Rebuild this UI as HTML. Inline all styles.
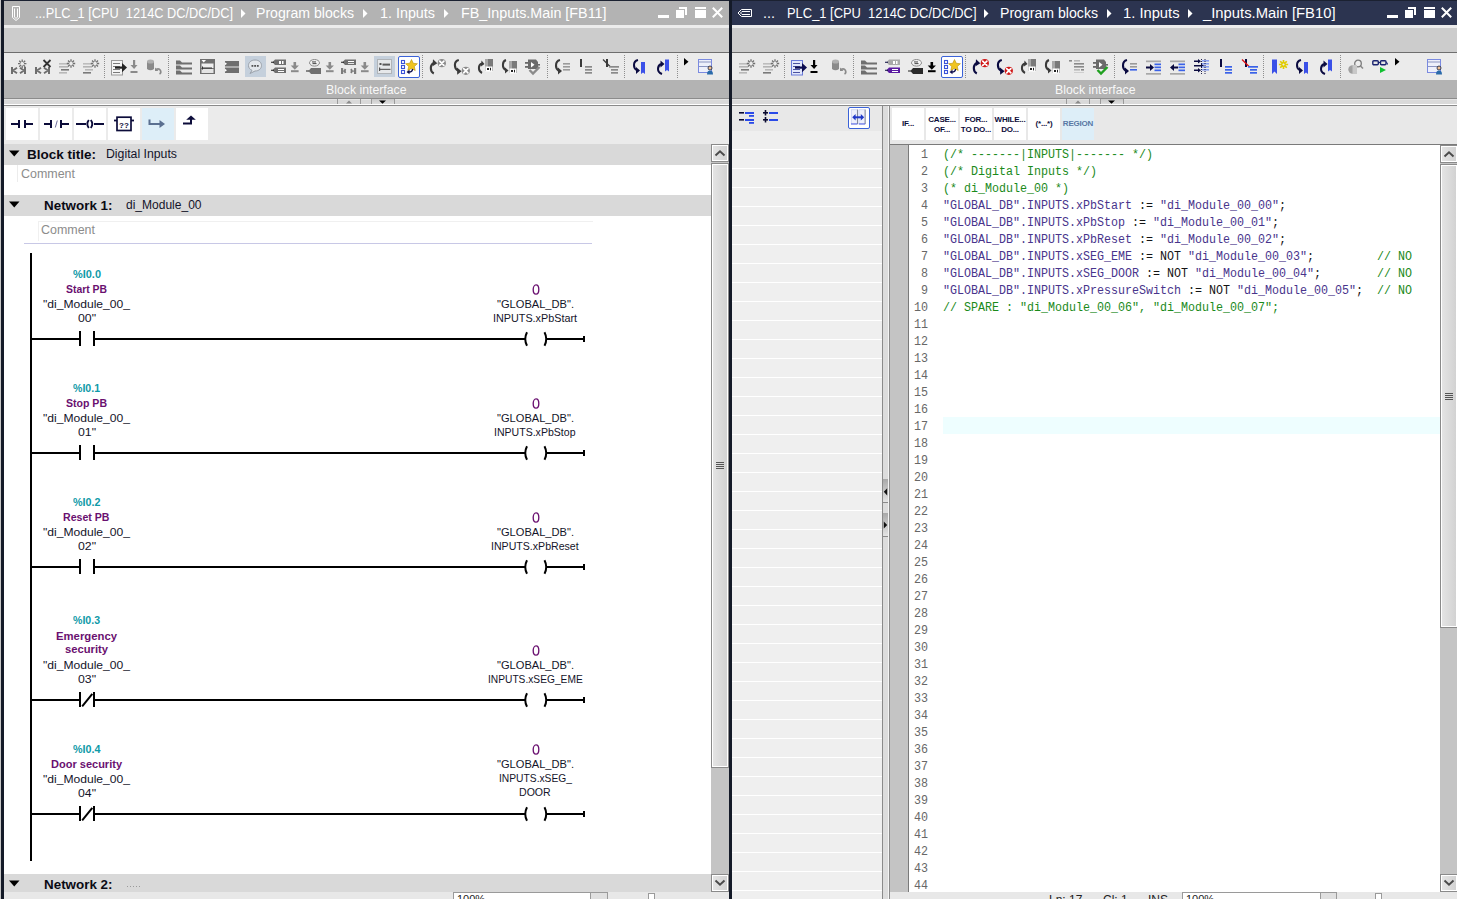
<!DOCTYPE html><html><head><meta charset="utf-8"><style>*{margin:0;padding:0;box-sizing:border-box}html,body{width:1457px;height:899px;overflow:hidden;background:#c8c8c8;font-family:"Liberation Sans",sans-serif}.t{position:absolute;white-space:nowrap;line-height:1}svg{position:absolute;overflow:visible}.mono{font-family:"Liberation Mono",monospace}</style></head><body>
<div style="position:absolute;left:0px;top:0px;width:1457px;height:1px;background:#1b2131"></div>
<div style="position:absolute;left:0px;top:0px;width:2px;height:899px;background:#c6c6c6"></div>
<div style="position:absolute;left:1px;top:0px;width:3px;height:899px;background:#141a28"></div>
<div style="position:absolute;left:729px;top:0px;width:3px;height:899px;background:#141a28"></div>
<div style="position:absolute;left:4px;top:1px;width:725px;height:24px;background:#b3b3b3"></div>
<div style="position:absolute;left:4px;top:25px;width:725px;height:3px;background:#ececec"></div>
<div style="position:absolute;left:4px;top:28px;width:725px;height:24px;background:#cccccc"></div>
<div style="position:absolute;left:4px;top:52px;width:725px;height:1px;background:#6e6e6e"></div>
<div style="position:absolute;left:4px;top:53px;width:725px;height:27px;background:#ebebeb"></div>
<div style="position:absolute;left:4px;top:80px;width:725px;height:18px;background:#b3b3b3"></div>
<div style="position:absolute;left:4px;top:98px;width:725px;height:1px;background:#8c8c8c"></div>
<div style="position:absolute;left:4px;top:99px;width:725px;height:5px;background:#d9d9d9"></div>
<div style="position:absolute;left:4px;top:99px;width:725px;height:1px;background:#e4e4e4"></div>
<div style="position:absolute;left:4px;top:104px;width:725px;height:1px;background:#ffffff"></div>
<div style="position:absolute;left:4px;top:105px;width:725px;height:1px;background:#8a8a8a"></div>
<div style="position:absolute;left:732px;top:1px;width:725px;height:24px;background:#2c3450"></div>
<div style="position:absolute;left:732px;top:25px;width:725px;height:3px;background:#ececec"></div>
<div style="position:absolute;left:732px;top:28px;width:725px;height:24px;background:#cccccc"></div>
<div style="position:absolute;left:732px;top:52px;width:725px;height:1px;background:#6e6e6e"></div>
<div style="position:absolute;left:732px;top:53px;width:725px;height:27px;background:#ebebeb"></div>
<div style="position:absolute;left:732px;top:80px;width:725px;height:18px;background:#b3b3b3"></div>
<div style="position:absolute;left:732px;top:98px;width:725px;height:1px;background:#8c8c8c"></div>
<div style="position:absolute;left:732px;top:99px;width:725px;height:5px;background:#d9d9d9"></div>
<div style="position:absolute;left:732px;top:99px;width:725px;height:1px;background:#e4e4e4"></div>
<div style="position:absolute;left:732px;top:104px;width:725px;height:1px;background:#ffffff"></div>
<div style="position:absolute;left:732px;top:105px;width:725px;height:1px;background:#8a8a8a"></div>
<div class="t" style="left:34.5px;top:6px;font-size:14px;color:#ffffff;transform-origin:0 0;transform:scaleX(0.9121);">...PLC_1 [CPU&nbsp;&nbsp;1214C DC/DC/DC]</div>
<div class="t" style="left:255.5px;top:6px;font-size:14px;color:#ffffff;transform-origin:0 0;transform:scaleX(1.0076);">Program blocks</div>
<div class="t" style="left:379.5px;top:6px;font-size:14px;color:#ffffff;transform-origin:0 0;transform:scaleX(1.0241);">1. Inputs</div>
<div class="t" style="left:460.5px;top:6px;font-size:14px;color:#ffffff;transform-origin:0 0;transform:scaleX(1.0236);">FB_Inputs.Main [FB11]</div>
<svg style="left:241px;top:9px" width="5" height="9"><path d="M0 0L4.5 4.5L0 9Z" fill="#ffffff"/></svg>
<svg style="left:363px;top:9px" width="5" height="9"><path d="M0 0L4.5 4.5L0 9Z" fill="#ffffff"/></svg>
<svg style="left:444px;top:9px" width="5" height="9"><path d="M0 0L4.5 4.5L0 9Z" fill="#ffffff"/></svg>
<div class="t" style="left:763px;top:6px;font-size:14px;color:#ffffff;transform-origin:0 0;transform:scaleX(1.0284);">...</div>
<div class="t" style="left:786.5px;top:6px;font-size:14px;color:#ffffff;transform-origin:0 0;transform:scaleX(0.9226);">PLC_1 [CPU&nbsp;&nbsp;1214C DC/DC/DC]</div>
<div class="t" style="left:999.5px;top:6px;font-size:14px;color:#ffffff;transform-origin:0 0;transform:scaleX(1.0076);">Program blocks</div>
<div class="t" style="left:1122.5px;top:6px;font-size:14px;color:#ffffff;transform-origin:0 0;transform:scaleX(1.0521);">1. Inputs</div>
<div class="t" style="left:1202.5px;top:6px;font-size:14px;color:#ffffff;transform-origin:0 0;transform:scaleX(1.0575);">_Inputs.Main [FB10]</div>
<svg style="left:984px;top:9px" width="5" height="9"><path d="M0 0L4.5 4.5L0 9Z" fill="#ffffff"/></svg>
<svg style="left:1107px;top:9px" width="5" height="9"><path d="M0 0L4.5 4.5L0 9Z" fill="#ffffff"/></svg>
<svg style="left:1188px;top:9px" width="5" height="9"><path d="M0 0L4.5 4.5L0 9Z" fill="#ffffff"/></svg>
<svg style="left:658px;top:0px" width="66" height="20"><rect x="0" y="15" width="11" height="3" fill="#fff"/><path d="M21 7H29V15H27V9H21Z" fill="#fff"/><rect x="18" y="10" width="8" height="8" fill="#fff"/><rect x="37" y="7" width="11" height="2" fill="#fff"/><rect x="37" y="10" width="11" height="8" fill="#fff"/><path d="M54.8 7.8L64.2 17.2M64.2 7.8L54.8 17.2" stroke="#fff" stroke-width="2"/></svg>
<svg style="left:1387px;top:0px" width="66" height="20"><rect x="0" y="15" width="11" height="3" fill="#fff"/><path d="M21 7H29V15H27V9H21Z" fill="#fff"/><rect x="18" y="10" width="8" height="8" fill="#fff"/><rect x="37" y="7" width="11" height="2" fill="#fff"/><rect x="37" y="10" width="11" height="8" fill="#fff"/><path d="M54.8 7.8L64.2 17.2M64.2 7.8L54.8 17.2" stroke="#fff" stroke-width="2"/></svg>
<svg style="left:11px;top:5px" width="10" height="17"><path d="M1.5 1.5h7v11l-3.5 3l-3.5-3z M3.5 3.5v8.5l1.5 1.5l1.5-1.5v-8.5" fill="none" stroke="#fff" stroke-width="1"/></svg>
<svg style="left:737px;top:8px" width="16" height="10"><path d="M14.5 1.5h-10l-3.5 3.5l3.5 3.5h10v-7z M13 3.5h-8l-1.5 1.5l1.5 1.5h8" fill="none" stroke="#fff" stroke-width="1"/></svg>
<div class="t" style="left:325.5px;top:83.5px;font-size:12px;color:#f8f8f8;transform-origin:0 0;transform:scaleX(1.0228);">Block interface</div>
<div class="t" style="left:1054.5px;top:83.5px;font-size:12px;color:#f8f8f8;transform-origin:0 0;transform:scaleX(1.0228);">Block interface</div>
<div style="position:absolute;left:337px;top:99px;width:1px;height:5px;background:#9a9a9a"></div>
<div style="position:absolute;left:360px;top:99px;width:1px;height:5px;background:#9a9a9a"></div>
<div style="position:absolute;left:371px;top:99px;width:1px;height:5px;background:#9a9a9a"></div>
<div style="position:absolute;left:372px;top:99px;width:22px;height:5px;background:linear-gradient(#c9c9c9,#dedede)"></div>
<div style="position:absolute;left:394px;top:99px;width:1px;height:5px;background:#9a9a9a"></div>
<svg style="left:346px;top:100px" width="6" height="4"><path d="M0 3.5L3 0.5L6 3.5Z" fill="#8a8a8a"/></svg>
<svg style="left:379px;top:100px" width="7" height="4"><path d="M0 0.5L3.5 3.8L7 0.5Z" fill="#000"/></svg>
<div style="position:absolute;left:1066px;top:99px;width:1px;height:5px;background:#9a9a9a"></div>
<div style="position:absolute;left:1089px;top:99px;width:1px;height:5px;background:#9a9a9a"></div>
<div style="position:absolute;left:1100px;top:99px;width:1px;height:5px;background:#9a9a9a"></div>
<div style="position:absolute;left:1101px;top:99px;width:22px;height:5px;background:linear-gradient(#c9c9c9,#dedede)"></div>
<div style="position:absolute;left:1123px;top:99px;width:1px;height:5px;background:#9a9a9a"></div>
<svg style="left:1075px;top:100px" width="6" height="4"><path d="M0 3.5L3 0.5L6 3.5Z" fill="#8a8a8a"/></svg>
<svg style="left:1108px;top:100px" width="7" height="4"><path d="M0 0.5L3.5 3.8L7 0.5Z" fill="#000"/></svg>
<div style="position:absolute;left:4px;top:106px;width:725px;height:38px;background:#ebebeb"></div>
<div style="position:absolute;left:6px;top:108px;width:32px;height:32px;background:#ffffff"></div>
<div style="position:absolute;left:40px;top:108px;width:32px;height:32px;background:#ffffff"></div>
<div style="position:absolute;left:74px;top:108px;width:32px;height:32px;background:#ffffff"></div>
<div style="position:absolute;left:108px;top:108px;width:32px;height:32px;background:#ffffff"></div>
<div style="position:absolute;left:142px;top:108px;width:32px;height:32px;background:#ddeef8"></div>
<div style="position:absolute;left:176px;top:108px;width:32px;height:32px;background:#ffffff"></div>
<svg style="left:6px;top:108px" width="210" height="32"><g fill="#0c0c3a"><rect x="5" y="15" width="7" height="2"/><rect x="12" y="12" width="2" height="8"/><rect x="18" y="12" width="2" height="8"/><rect x="20" y="15" width="7" height="2"/><rect x="38" y="15" width="6" height="2"/><rect x="44" y="12" width="2" height="8"/><rect x="54" y="12" width="2" height="8"/><rect x="56" y="15" width="7" height="2"/><rect x="70" y="15" width="10" height="2"/><rect x="88" y="15" width="10" height="2"/></g><path d="M49.3 19.5L51.3 12.5" stroke="#7070a0" stroke-width="1"/><path d="M82.8 12Q79.8 16 82.8 20M84.8 12Q87.8 16 84.8 20" stroke="#0c0c3a" stroke-width="1.9" fill="none"/><rect x="111" y="9.2" width="14" height="13.3" fill="none" stroke="#0c0c3a" stroke-width="1.7"/><rect x="108" y="11.6" width="3" height="1.8" fill="#0c0c3a"/><rect x="125" y="11.6" width="3" height="1.8" fill="#0c0c3a"/><text x="113" y="19.6" font-family="Liberation Sans" font-weight="bold" font-size="8" fill="#0c0c3a">??</text><path d="M143.5 11.5v4.5h12" stroke="#5a6f90" stroke-width="2" fill="none"/><path d="M153.5 12L159 16L153.5 20Z" fill="#5a6f90"/><path d="M177 15.5h8v-5.5" stroke="#0c0c3a" stroke-width="2" fill="none"/><path d="M180.2 11.8L185 7.5L189.8 11.8Z" fill="#0c0c3a"/></svg>
<div style="position:absolute;left:4px;top:144px;width:707px;height:21px;background:#d9d9d9"></div>
<svg style="left:9px;top:150px" width="11" height="7"><path d="M0 0.5H10.5L5.25 6.5Z" fill="#000"/></svg>
<div class="t" style="left:27px;top:148px;font-size:13px;color:#0a0a14;font-weight:bold;transform-origin:0 0;transform:scaleX(1.0383);">Block title:</div>
<div class="t" style="left:106px;top:148px;font-size:12px;color:#14142a;transform-origin:0 0;transform:scaleX(1.0235);">Digital Inputs</div>
<div style="position:absolute;left:4px;top:165px;width:707px;height:30px;background:#fff"></div>
<div style="position:absolute;left:17px;top:165px;width:1px;height:17px;background:#ececec"></div>
<div class="t" style="left:21px;top:168px;font-size:12px;color:#8c8c8c;transform-origin:0 0;transform:scaleX(1.0382);">Comment</div>
<div style="position:absolute;left:4px;top:195px;width:707px;height:21px;background:#d9d9d9"></div>
<svg style="left:9px;top:201px" width="11" height="7"><path d="M0 0.5H10.5L5.25 6.5Z" fill="#000"/></svg>
<div class="t" style="left:43.5px;top:199px;font-size:13px;color:#0a0a14;font-weight:bold;transform-origin:0 0;transform:scaleX(1.0307);">Network 1:</div>
<div class="t" style="left:126px;top:199px;font-size:12px;color:#14142a;transform-origin:0 0;transform:scaleX(1.0014);">di_Module_00</div>
<div style="position:absolute;left:4px;top:216px;width:707px;height:658px;background:#fff"></div>
<div style="position:absolute;left:38px;top:221px;width:555px;height:1px;background:#f0f0f0"></div>
<div style="position:absolute;left:38px;top:221px;width:1px;height:20px;background:#f0f0f0"></div>
<div class="t" style="left:41px;top:224px;font-size:12px;color:#8c8c8c;transform-origin:0 0;transform:scaleX(1.0382);">Comment</div>
<div style="position:absolute;left:24px;top:243px;width:568px;height:1px;background:#c8c8e6"></div>
<div style="position:absolute;left:30px;top:253px;width:2px;height:608px;background:#000"></div>
<div class="t" style="left:72.5px;top:269.19px;font-size:11px;color:#0f9aa8;font-weight:bold;transform-origin:0 0;transform:scaleX(0.9954);">%I0.0</div>
<div class="t" style="left:66.0px;top:284.39px;font-size:11px;color:#6a1070;font-weight:bold;transform-origin:0 0;transform:scaleX(0.9447);">Start PB</div>
<div class="t" style="left:43.0px;top:299.39px;font-size:11px;color:#14142a;transform-origin:0 0;transform:scaleX(1.0994);">&quot;di_Module_00_</div>
<div class="t" style="left:77.5px;top:313.39px;font-size:11px;color:#14142a;transform-origin:0 0;transform:scaleX(1.1152);">00&quot;</div>
<div class="t" style="left:496.5px;top:299.39px;font-size:11px;color:#14142a;transform-origin:0 0;transform:scaleX(1.0093);">&quot;GLOBAL_DB&quot;.</div>
<div class="t" style="left:493.0px;top:313.39px;font-size:11px;color:#14142a;transform-origin:0 0;transform:scaleX(0.9815);">INPUTS.xPbStart</div>
<svg style="left:531px;top:283.7px" width="10" height="11"><ellipse cx="5" cy="5.5" rx="2.8" ry="4.6" stroke="#6a1070" stroke-width="1.35" fill="none"/></svg>
<div style="position:absolute;left:32px;top:338px;width:492px;height:2px;background:#000"></div>
<div style="position:absolute;left:547px;top:338px;width:37px;height:2px;background:#000"></div>
<div style="position:absolute;left:583px;top:336px;width:2px;height:6px;background:#000"></div>
<svg style="left:77px;top:330px" width="20" height="18"><rect x="0" y="0" width="20" height="18" fill="#fff"/><rect x="2" y="1" width="2" height="15" fill="#000"/><rect x="16" y="1" width="2" height="15" fill="#000"/><rect x="0" y="8" width="2" height="2" fill="#000"/><rect x="18" y="8" width="2" height="2" fill="#000"/></svg>
<svg style="left:522px;top:330px" width="28" height="18"><rect x="0" y="0" width="28" height="18" fill="#fff"/><rect x="0" y="8" width="3" height="2" fill="#000"/><rect x="25" y="8" width="3" height="2" fill="#000"/><path d="M5 2.2Q1.5 9 5 15.8" stroke="#000" stroke-width="2" fill="none"/><path d="M22.5 2.2Q26 9 22.5 15.8" stroke="#000" stroke-width="2" fill="none"/></svg>
<div class="t" style="left:73.0px;top:383.19px;font-size:11px;color:#0f9aa8;font-weight:bold;transform-origin:0 0;transform:scaleX(0.9599);">%I0.1</div>
<div class="t" style="left:66.0px;top:398.39px;font-size:11px;color:#6a1070;font-weight:bold;transform-origin:0 0;transform:scaleX(0.9585);">Stop PB</div>
<div class="t" style="left:43.0px;top:413.39px;font-size:11px;color:#14142a;transform-origin:0 0;transform:scaleX(1.0994);">&quot;di_Module_00_</div>
<div class="t" style="left:77.5px;top:427.39px;font-size:11px;color:#14142a;transform-origin:0 0;transform:scaleX(1.1152);">01&quot;</div>
<div class="t" style="left:496.5px;top:413.39px;font-size:11px;color:#14142a;transform-origin:0 0;transform:scaleX(1.0093);">&quot;GLOBAL_DB&quot;.</div>
<div class="t" style="left:494.25px;top:427.39px;font-size:11px;color:#14142a;transform-origin:0 0;transform:scaleX(0.9591);">INPUTS.xPbStop</div>
<svg style="left:531px;top:397.7px" width="10" height="11"><ellipse cx="5" cy="5.5" rx="2.8" ry="4.6" stroke="#6a1070" stroke-width="1.35" fill="none"/></svg>
<div style="position:absolute;left:32px;top:452px;width:492px;height:2px;background:#000"></div>
<div style="position:absolute;left:547px;top:452px;width:37px;height:2px;background:#000"></div>
<div style="position:absolute;left:583px;top:450px;width:2px;height:6px;background:#000"></div>
<svg style="left:77px;top:444px" width="20" height="18"><rect x="0" y="0" width="20" height="18" fill="#fff"/><rect x="2" y="1" width="2" height="15" fill="#000"/><rect x="16" y="1" width="2" height="15" fill="#000"/><rect x="0" y="8" width="2" height="2" fill="#000"/><rect x="18" y="8" width="2" height="2" fill="#000"/></svg>
<svg style="left:522px;top:444px" width="28" height="18"><rect x="0" y="0" width="28" height="18" fill="#fff"/><rect x="0" y="8" width="3" height="2" fill="#000"/><rect x="25" y="8" width="3" height="2" fill="#000"/><path d="M5 2.2Q1.5 9 5 15.8" stroke="#000" stroke-width="2" fill="none"/><path d="M22.5 2.2Q26 9 22.5 15.8" stroke="#000" stroke-width="2" fill="none"/></svg>
<div class="t" style="left:72.75px;top:497.19px;font-size:11px;color:#0f9aa8;font-weight:bold;transform-origin:0 0;transform:scaleX(0.9777);">%I0.2</div>
<div class="t" style="left:63.25px;top:512.39px;font-size:11px;color:#6a1070;font-weight:bold;transform-origin:0 0;transform:scaleX(0.9628);">Reset PB</div>
<div class="t" style="left:43.0px;top:527.39px;font-size:11px;color:#14142a;transform-origin:0 0;transform:scaleX(1.0994);">&quot;di_Module_00_</div>
<div class="t" style="left:77.5px;top:541.39px;font-size:11px;color:#14142a;transform-origin:0 0;transform:scaleX(1.1152);">02&quot;</div>
<div class="t" style="left:496.5px;top:527.39px;font-size:11px;color:#14142a;transform-origin:0 0;transform:scaleX(1.0093);">&quot;GLOBAL_DB&quot;.</div>
<div class="t" style="left:491.15px;top:541.39px;font-size:11px;color:#14142a;transform-origin:0 0;transform:scaleX(0.9628);">INPUTS.xPbReset</div>
<svg style="left:531px;top:511.70000000000005px" width="10" height="11"><ellipse cx="5" cy="5.5" rx="2.8" ry="4.6" stroke="#6a1070" stroke-width="1.35" fill="none"/></svg>
<div style="position:absolute;left:32px;top:566px;width:492px;height:2px;background:#000"></div>
<div style="position:absolute;left:547px;top:566px;width:37px;height:2px;background:#000"></div>
<div style="position:absolute;left:583px;top:564px;width:2px;height:6px;background:#000"></div>
<svg style="left:77px;top:558px" width="20" height="18"><rect x="0" y="0" width="20" height="18" fill="#fff"/><rect x="2" y="1" width="2" height="15" fill="#000"/><rect x="16" y="1" width="2" height="15" fill="#000"/><rect x="0" y="8" width="2" height="2" fill="#000"/><rect x="18" y="8" width="2" height="2" fill="#000"/></svg>
<svg style="left:522px;top:558px" width="28" height="18"><rect x="0" y="0" width="28" height="18" fill="#fff"/><rect x="0" y="8" width="3" height="2" fill="#000"/><rect x="25" y="8" width="3" height="2" fill="#000"/><path d="M5 2.2Q1.5 9 5 15.8" stroke="#000" stroke-width="2" fill="none"/><path d="M22.5 2.2Q26 9 22.5 15.8" stroke="#000" stroke-width="2" fill="none"/></svg>
<div class="t" style="left:73.0px;top:615.49px;font-size:11px;color:#0f9aa8;font-weight:bold;transform-origin:0 0;transform:scaleX(0.9599);">%I0.3</div>
<div class="t" style="left:56.0px;top:630.69px;font-size:11px;color:#6a1070;font-weight:bold;transform-origin:0 0;transform:scaleX(1.0285);">Emergency</div>
<div class="t" style="left:65.0px;top:644.39px;font-size:11px;color:#6a1070;font-weight:bold;transform-origin:0 0;transform:scaleX(1.0192);">security</div>
<div class="t" style="left:43.0px;top:660.39px;font-size:11px;color:#14142a;transform-origin:0 0;transform:scaleX(1.0994);">&quot;di_Module_00_</div>
<div class="t" style="left:77.5px;top:674.39px;font-size:11px;color:#14142a;transform-origin:0 0;transform:scaleX(1.1152);">03&quot;</div>
<div class="t" style="left:496.5px;top:660.39px;font-size:11px;color:#14142a;transform-origin:0 0;transform:scaleX(1.0093);">&quot;GLOBAL_DB&quot;.</div>
<div class="t" style="left:487.65px;top:674.39px;font-size:11px;color:#14142a;transform-origin:0 0;transform:scaleX(0.9277);">INPUTS.xSEG_EME</div>
<svg style="left:531px;top:644.7px" width="10" height="11"><ellipse cx="5" cy="5.5" rx="2.8" ry="4.6" stroke="#6a1070" stroke-width="1.35" fill="none"/></svg>
<div style="position:absolute;left:32px;top:699px;width:492px;height:2px;background:#000"></div>
<div style="position:absolute;left:547px;top:699px;width:37px;height:2px;background:#000"></div>
<div style="position:absolute;left:583px;top:697px;width:2px;height:6px;background:#000"></div>
<svg style="left:77px;top:691px" width="20" height="18"><rect x="0" y="0" width="20" height="18" fill="#fff"/><rect x="2" y="1" width="2" height="15" fill="#000"/><rect x="16" y="1" width="2" height="15" fill="#000"/><rect x="0" y="8" width="2" height="2" fill="#000"/><rect x="18" y="8" width="2" height="2" fill="#000"/><path d="M5.2 15.3L15.3 2.8" stroke="#000" stroke-width="2"/></svg>
<svg style="left:522px;top:691px" width="28" height="18"><rect x="0" y="0" width="28" height="18" fill="#fff"/><rect x="0" y="8" width="3" height="2" fill="#000"/><rect x="25" y="8" width="3" height="2" fill="#000"/><path d="M5 2.2Q1.5 9 5 15.8" stroke="#000" stroke-width="2" fill="none"/><path d="M22.5 2.2Q26 9 22.5 15.8" stroke="#000" stroke-width="2" fill="none"/></svg>
<div class="t" style="left:72.75px;top:744.19px;font-size:11px;color:#0f9aa8;font-weight:bold;transform-origin:0 0;transform:scaleX(0.9777);">%I0.4</div>
<div class="t" style="left:51.0px;top:759.39px;font-size:11px;color:#6a1070;font-weight:bold;transform-origin:0 0;transform:scaleX(1.0013);">Door security</div>
<div class="t" style="left:43.0px;top:774.39px;font-size:11px;color:#14142a;transform-origin:0 0;transform:scaleX(1.0994);">&quot;di_Module_00_</div>
<div class="t" style="left:77.5px;top:788.39px;font-size:11px;color:#14142a;transform-origin:0 0;transform:scaleX(1.1152);">04&quot;</div>
<div class="t" style="left:496.5px;top:759.19px;font-size:11px;color:#14142a;transform-origin:0 0;transform:scaleX(1.0093);">&quot;GLOBAL_DB&quot;.</div>
<div class="t" style="left:498.5px;top:773.19px;font-size:11px;color:#14142a;transform-origin:0 0;transform:scaleX(0.9330);">INPUTS.xSEG_</div>
<div class="t" style="left:519.15px;top:787.19px;font-size:11px;color:#14142a;transform-origin:0 0;transform:scaleX(0.9606);">DOOR</div>
<svg style="left:531px;top:743.5px" width="10" height="11"><ellipse cx="5" cy="5.5" rx="2.8" ry="4.6" stroke="#6a1070" stroke-width="1.35" fill="none"/></svg>
<div style="position:absolute;left:32px;top:813px;width:492px;height:2px;background:#000"></div>
<div style="position:absolute;left:547px;top:813px;width:37px;height:2px;background:#000"></div>
<div style="position:absolute;left:583px;top:811px;width:2px;height:6px;background:#000"></div>
<svg style="left:77px;top:805px" width="20" height="18"><rect x="0" y="0" width="20" height="18" fill="#fff"/><rect x="2" y="1" width="2" height="15" fill="#000"/><rect x="16" y="1" width="2" height="15" fill="#000"/><rect x="0" y="8" width="2" height="2" fill="#000"/><rect x="18" y="8" width="2" height="2" fill="#000"/><path d="M5.2 15.3L15.3 2.8" stroke="#000" stroke-width="2"/></svg>
<svg style="left:522px;top:805px" width="28" height="18"><rect x="0" y="0" width="28" height="18" fill="#fff"/><rect x="0" y="8" width="3" height="2" fill="#000"/><rect x="25" y="8" width="3" height="2" fill="#000"/><path d="M5 2.2Q1.5 9 5 15.8" stroke="#000" stroke-width="2" fill="none"/><path d="M22.5 2.2Q26 9 22.5 15.8" stroke="#000" stroke-width="2" fill="none"/></svg>
<div style="position:absolute;left:4px;top:874px;width:707px;height:18px;background:#d9d9d9"></div>
<svg style="left:9px;top:880px" width="11" height="7"><path d="M0 0.5H10.5L5.25 6.5Z" fill="#000"/></svg>
<div class="t" style="left:43.5px;top:878px;font-size:13px;color:#0a0a14;font-weight:bold;transform-origin:0 0;transform:scaleX(1.0307);">Network 2:</div>
<svg style="left:127px;top:886px" width="15" height="2"><path d="M0 .5H15" stroke="#9a9a9a" stroke-width="1" stroke-dasharray="1 2"/></svg>
<div style="position:absolute;left:4px;top:892px;width:725px;height:7px;background:#e8e8e8"></div>
<div style="position:absolute;left:453px;top:892px;width:155px;height:7px;background:#fff;border:1px solid #9a9a9a;border-bottom:none"></div>
<div style="position:absolute;left:590px;top:892px;width:18px;height:7px;background:#e0e0e0;border:1px solid #9a9a9a;border-bottom:none"></div>
<div style="position:absolute;left:648px;top:893px;width:7px;height:6px;background:#fff;border:1px solid #9a9a9a;border-bottom:none"></div>
<div style="position:absolute;left:711px;top:144px;width:18px;height:748px;background:#c4c4c4"></div>
<div style="position:absolute;left:711px;top:144px;width:18px;height:18px;background:#fff;border:1px solid #8a8a8a"></div>
<div style="position:absolute;left:713px;top:146px;width:14px;height:14px;background:linear-gradient(90deg,#e4e4e4,#d2d2d2)"></div>
<svg style="left:714px;top:149px" width="12" height="8"><path d="M1.5 6.5L6 2.2L10.5 6.5" stroke="#4a4a4a" stroke-width="1.9" fill="none"/></svg>
<div style="position:absolute;left:711px;top:163px;width:18px;height:605px;background:#fff;border:1px solid #8a8a8a"></div>
<div style="position:absolute;left:713px;top:165px;width:14px;height:601px;background:linear-gradient(90deg,#e4e4e4,#d2d2d2)"></div>
<svg style="left:716px;top:462px" width="9" height="8"><path d="M0 .5h8M0 2.5h8M0 4.5h8M0 6.5h8" stroke="#555" stroke-width="1"/></svg>
<div style="position:absolute;left:711px;top:874px;width:18px;height:18px;background:#fff;border:1px solid #8a8a8a"></div>
<div style="position:absolute;left:713px;top:876px;width:14px;height:14px;background:linear-gradient(90deg,#e4e4e4,#d2d2d2)"></div>
<svg style="left:714px;top:879px" width="12" height="8"><path d="M1.5 1.5L6 5.8L10.5 1.5" stroke="#4a4a4a" stroke-width="1.9" fill="none"/></svg>
<div style="position:absolute;left:732px;top:106px;width:150px;height:25px;background:#e8e8e8"></div>
<div style="position:absolute;left:732px;top:131px;width:150px;height:768px;background:#efefef"></div>
<div style="position:absolute;left:732px;top:149px;width:150px;height:1px;background:#ffffff"></div>
<div style="position:absolute;left:732px;top:168px;width:150px;height:1px;background:#ffffff"></div>
<div style="position:absolute;left:732px;top:187px;width:150px;height:1px;background:#ffffff"></div>
<div style="position:absolute;left:732px;top:206px;width:150px;height:1px;background:#ffffff"></div>
<div style="position:absolute;left:732px;top:225px;width:150px;height:1px;background:#ffffff"></div>
<div style="position:absolute;left:732px;top:244px;width:150px;height:1px;background:#ffffff"></div>
<div style="position:absolute;left:732px;top:263px;width:150px;height:1px;background:#ffffff"></div>
<div style="position:absolute;left:732px;top:282px;width:150px;height:1px;background:#ffffff"></div>
<div style="position:absolute;left:732px;top:301px;width:150px;height:1px;background:#ffffff"></div>
<div style="position:absolute;left:732px;top:320px;width:150px;height:1px;background:#ffffff"></div>
<div style="position:absolute;left:732px;top:339px;width:150px;height:1px;background:#ffffff"></div>
<div style="position:absolute;left:732px;top:358px;width:150px;height:1px;background:#ffffff"></div>
<div style="position:absolute;left:732px;top:377px;width:150px;height:1px;background:#ffffff"></div>
<div style="position:absolute;left:732px;top:396px;width:150px;height:1px;background:#ffffff"></div>
<div style="position:absolute;left:732px;top:415px;width:150px;height:1px;background:#ffffff"></div>
<div style="position:absolute;left:732px;top:434px;width:150px;height:1px;background:#ffffff"></div>
<div style="position:absolute;left:732px;top:453px;width:150px;height:1px;background:#ffffff"></div>
<div style="position:absolute;left:732px;top:472px;width:150px;height:1px;background:#ffffff"></div>
<div style="position:absolute;left:732px;top:491px;width:150px;height:1px;background:#ffffff"></div>
<div style="position:absolute;left:732px;top:510px;width:150px;height:1px;background:#ffffff"></div>
<div style="position:absolute;left:732px;top:529px;width:150px;height:1px;background:#ffffff"></div>
<div style="position:absolute;left:732px;top:548px;width:150px;height:1px;background:#ffffff"></div>
<div style="position:absolute;left:732px;top:567px;width:150px;height:1px;background:#ffffff"></div>
<div style="position:absolute;left:732px;top:586px;width:150px;height:1px;background:#ffffff"></div>
<div style="position:absolute;left:732px;top:605px;width:150px;height:1px;background:#ffffff"></div>
<div style="position:absolute;left:732px;top:624px;width:150px;height:1px;background:#ffffff"></div>
<div style="position:absolute;left:732px;top:643px;width:150px;height:1px;background:#ffffff"></div>
<div style="position:absolute;left:732px;top:662px;width:150px;height:1px;background:#ffffff"></div>
<div style="position:absolute;left:732px;top:681px;width:150px;height:1px;background:#ffffff"></div>
<div style="position:absolute;left:732px;top:700px;width:150px;height:1px;background:#ffffff"></div>
<div style="position:absolute;left:732px;top:719px;width:150px;height:1px;background:#ffffff"></div>
<div style="position:absolute;left:732px;top:738px;width:150px;height:1px;background:#ffffff"></div>
<div style="position:absolute;left:732px;top:757px;width:150px;height:1px;background:#ffffff"></div>
<div style="position:absolute;left:732px;top:776px;width:150px;height:1px;background:#ffffff"></div>
<div style="position:absolute;left:732px;top:795px;width:150px;height:1px;background:#ffffff"></div>
<div style="position:absolute;left:732px;top:814px;width:150px;height:1px;background:#ffffff"></div>
<div style="position:absolute;left:732px;top:833px;width:150px;height:1px;background:#ffffff"></div>
<div style="position:absolute;left:732px;top:852px;width:150px;height:1px;background:#ffffff"></div>
<div style="position:absolute;left:732px;top:871px;width:150px;height:1px;background:#ffffff"></div>
<div style="position:absolute;left:732px;top:890px;width:150px;height:1px;background:#ffffff"></div>
<div style="position:absolute;left:848px;top:107px;width:22px;height:22px;background:#fff;border:1.5px solid #3a62d8;border-radius:2px"></div>
<svg style="left:850px;top:109px" width="18" height="17"><rect x="1.2" y="0.8" width="6" height="14" fill="#eef0fb" stroke="#b8c0f0" stroke-width="0.6"/><rect x="8.9" y="0.8" width="6" height="14" fill="#eef0fb" stroke="#b8c0f0" stroke-width="0.6"/><path d="M7.5 0.5V15M15.2 0.5V15" stroke="#7a8090" stroke-width="0.9"/><path d="M1 15H7.5M8.8 15H15.2" stroke="#4a5ae0" stroke-width="1"/><path d="M4.5 8.3H11.8" stroke="#2038c8" stroke-width="2"/><path d="M2.2 8.3L5.6 5V11.6Z M14.2 8.3L10.8 5V11.6Z" fill="#2038c8"/></svg>
<svg style="left:732px;top:104px" width="60" height="30"><rect x="7" y="8" width="5" height="1.6" fill="#0a0a30"/><rect x="13" y="8" width="9" height="2" fill="#2a4ae8"/><rect x="17" y="11" width="5" height="1.8" fill="#2a4ae8"/><rect x="7" y="15" width="5" height="1.6" fill="#0a0a30"/><rect x="13" y="15" width="9" height="2" fill="#2a4ae8"/><rect x="17" y="18" width="5" height="1.8" fill="#2a4ae8"/><rect x="31" y="8" width="5" height="1.6" fill="#0a0a30"/><rect x="32.7" y="6" width="1.6" height="5.5" fill="#0a0a30"/><rect x="37" y="8" width="9" height="2" fill="#2a4ae8"/><rect x="31" y="15" width="5" height="1.6" fill="#0a0a30"/><rect x="32.7" y="13" width="1.6" height="5.5" fill="#0a0a30"/><rect x="37" y="15" width="9" height="2" fill="#2a4ae8"/></svg>
<div style="position:absolute;left:882px;top:106px;width:1px;height:793px;background:#8a8a8a"></div>
<div style="position:absolute;left:883px;top:106px;width:5px;height:793px;background:#dcdcdc"></div>
<div style="position:absolute;left:888px;top:106px;width:1px;height:793px;background:#f4f4f4"></div>
<div style="position:absolute;left:889px;top:106px;width:1px;height:793px;background:#8a8a8a"></div>
<div style="position:absolute;left:883px;top:479px;width:5px;height:23px;background:linear-gradient(#a8a8a8,#e4e4e4)"></div>
<div style="position:absolute;left:883px;top:502px;width:5px;height:1px;background:#8a8a8a"></div>
<div style="position:absolute;left:883px;top:513px;width:5px;height:23px;background:linear-gradient(#a8a8a8,#e4e4e4)"></div>
<div style="position:absolute;left:883px;top:536px;width:5px;height:1px;background:#8a8a8a"></div>
<svg style="left:883px;top:488px" width="5" height="41"><path d="M4.2 0.2L0.8 3.8L4.2 7.4Z M0.8 33.4L4.2 37L0.8 40.6Z" fill="#111"/></svg>
<div style="position:absolute;left:890px;top:106px;width:567px;height:38px;background:#e8e8e8"></div>
<div style="position:absolute;left:892px;top:108px;width:32px;height:32px;background:#ffffff"></div>
<div class="t" style="left:892px;top:120px;font-size:8px;color:#0c0c3a;width:32px;text-align:center;font-weight:bold;letter-spacing:-0.2px">IF...</div>
<div style="position:absolute;left:926px;top:108px;width:32px;height:32px;background:#ffffff"></div>
<div class="t" style="left:926px;top:115.5px;font-size:8px;color:#0c0c3a;width:32px;text-align:center;font-weight:bold;letter-spacing:-0.2px">CASE...</div>
<div class="t" style="left:926px;top:125.5px;font-size:8px;color:#0c0c3a;width:32px;text-align:center;font-weight:bold;letter-spacing:-0.2px">OF...</div>
<div style="position:absolute;left:960px;top:108px;width:32px;height:32px;background:#ffffff"></div>
<div class="t" style="left:960px;top:115.5px;font-size:8px;color:#0c0c3a;width:32px;text-align:center;font-weight:bold;letter-spacing:-0.2px">FOR...</div>
<div class="t" style="left:960px;top:125.5px;font-size:8px;color:#0c0c3a;width:32px;text-align:center;font-weight:bold;letter-spacing:-0.2px">TO DO...</div>
<div style="position:absolute;left:994px;top:108px;width:32px;height:32px;background:#ffffff"></div>
<div class="t" style="left:994px;top:115.5px;font-size:8px;color:#0c0c3a;width:32px;text-align:center;font-weight:bold;letter-spacing:-0.2px">WHILE...</div>
<div class="t" style="left:994px;top:125.5px;font-size:8px;color:#0c0c3a;width:32px;text-align:center;font-weight:bold;letter-spacing:-0.2px">DO...</div>
<div style="position:absolute;left:1028px;top:108px;width:32px;height:32px;background:#ffffff"></div>
<div class="t" style="left:1028px;top:120px;font-size:8px;color:#0c0c3a;width:32px;text-align:center;font-weight:bold;letter-spacing:-0.2px">(*...*)</div>
<div style="position:absolute;left:1062px;top:108px;width:32px;height:32px;background:#ddeef8"></div>
<div class="t" style="left:1062px;top:120px;font-size:8px;color:#5a78a4;width:32px;text-align:center;font-weight:bold;letter-spacing:-0.2px">REGION</div>
<div style="position:absolute;left:890px;top:144px;width:567px;height:1px;background:#7a7a7a"></div>
<div style="position:absolute;left:890px;top:145px;width:18px;height:747px;background:#c4c4c4"></div>
<div style="position:absolute;left:908px;top:145px;width:1px;height:747px;background:#7a7a7a"></div>
<div style="position:absolute;left:909px;top:145px;width:531px;height:747px;background:#ffffff"></div>
<div style="position:absolute;left:943px;top:417px;width:497px;height:17px;background:#eefeff"></div>
<div class="t mono" style="left:921px;top:147px;font-size:12px;line-height:17px;color:#676767;transform-origin:0 0;transform:scaleX(0.9722)">1</div>
<div class="t mono" style="left:943px;top:147px;font-size:12px;line-height:17px;white-space:pre;transform-origin:0 0;transform:scaleX(0.9722)"><span style="color:#1a8a1a">(/* -------|INPUTS|------- */)</span></div>
<div class="t mono" style="left:921px;top:164px;font-size:12px;line-height:17px;color:#676767;transform-origin:0 0;transform:scaleX(0.9722)">2</div>
<div class="t mono" style="left:943px;top:164px;font-size:12px;line-height:17px;white-space:pre;transform-origin:0 0;transform:scaleX(0.9722)"><span style="color:#1a8a1a">(/* Digital Inputs */)</span></div>
<div class="t mono" style="left:921px;top:181px;font-size:12px;line-height:17px;color:#676767;transform-origin:0 0;transform:scaleX(0.9722)">3</div>
<div class="t mono" style="left:943px;top:181px;font-size:12px;line-height:17px;white-space:pre;transform-origin:0 0;transform:scaleX(0.9722)"><span style="color:#1a8a1a">(* di_Module_00 *)</span></div>
<div class="t mono" style="left:921px;top:198px;font-size:12px;line-height:17px;color:#676767;transform-origin:0 0;transform:scaleX(0.9722)">4</div>
<div class="t mono" style="left:943px;top:198px;font-size:12px;line-height:17px;white-space:pre;transform-origin:0 0;transform:scaleX(0.9722)"><span style="color:#48348c">&quot;GLOBAL_DB&quot;.INPUTS.xPbStart</span><span style="color:#141414"> := </span><span style="color:#48348c">&quot;di_Module_00_00&quot;</span><span style="color:#141414">;</span></div>
<div class="t mono" style="left:921px;top:215px;font-size:12px;line-height:17px;color:#676767;transform-origin:0 0;transform:scaleX(0.9722)">5</div>
<div class="t mono" style="left:943px;top:215px;font-size:12px;line-height:17px;white-space:pre;transform-origin:0 0;transform:scaleX(0.9722)"><span style="color:#48348c">&quot;GLOBAL_DB&quot;.INPUTS.xPbStop</span><span style="color:#141414"> := </span><span style="color:#48348c">&quot;di_Module_00_01&quot;</span><span style="color:#141414">;</span></div>
<div class="t mono" style="left:921px;top:232px;font-size:12px;line-height:17px;color:#676767;transform-origin:0 0;transform:scaleX(0.9722)">6</div>
<div class="t mono" style="left:943px;top:232px;font-size:12px;line-height:17px;white-space:pre;transform-origin:0 0;transform:scaleX(0.9722)"><span style="color:#48348c">&quot;GLOBAL_DB&quot;.INPUTS.xPbReset</span><span style="color:#141414"> := </span><span style="color:#48348c">&quot;di_Module_00_02&quot;</span><span style="color:#141414">;</span></div>
<div class="t mono" style="left:921px;top:249px;font-size:12px;line-height:17px;color:#676767;transform-origin:0 0;transform:scaleX(0.9722)">7</div>
<div class="t mono" style="left:943px;top:249px;font-size:12px;line-height:17px;white-space:pre;transform-origin:0 0;transform:scaleX(0.9722)"><span style="color:#48348c">&quot;GLOBAL_DB&quot;.INPUTS.xSEG_EME</span><span style="color:#141414"> := NOT </span><span style="color:#48348c">&quot;di_Module_00_03&quot;</span><span style="color:#141414">;         </span><span style="color:#1a8a1a">// NO</span></div>
<div class="t mono" style="left:921px;top:266px;font-size:12px;line-height:17px;color:#676767;transform-origin:0 0;transform:scaleX(0.9722)">8</div>
<div class="t mono" style="left:943px;top:266px;font-size:12px;line-height:17px;white-space:pre;transform-origin:0 0;transform:scaleX(0.9722)"><span style="color:#48348c">&quot;GLOBAL_DB&quot;.INPUTS.xSEG_DOOR</span><span style="color:#141414"> := NOT </span><span style="color:#48348c">&quot;di_Module_00_04&quot;</span><span style="color:#141414">;        </span><span style="color:#1a8a1a">// NO</span></div>
<div class="t mono" style="left:921px;top:283px;font-size:12px;line-height:17px;color:#676767;transform-origin:0 0;transform:scaleX(0.9722)">9</div>
<div class="t mono" style="left:943px;top:283px;font-size:12px;line-height:17px;white-space:pre;transform-origin:0 0;transform:scaleX(0.9722)"><span style="color:#48348c">&quot;GLOBAL_DB&quot;.INPUTS.xPressureSwitch</span><span style="color:#141414"> := NOT </span><span style="color:#48348c">&quot;di_Module_00_05&quot;</span><span style="color:#141414">;  </span><span style="color:#1a8a1a">// NO</span></div>
<div class="t mono" style="left:914px;top:300px;font-size:12px;line-height:17px;color:#676767;transform-origin:0 0;transform:scaleX(0.9722)">10</div>
<div class="t mono" style="left:943px;top:300px;font-size:12px;line-height:17px;white-space:pre;transform-origin:0 0;transform:scaleX(0.9722)"><span style="color:#1a8a1a">// SPARE : &quot;di_Module_00_06&quot;, &quot;di_Module_00_07&quot;;</span></div>
<div class="t mono" style="left:914px;top:317px;font-size:12px;line-height:17px;color:#676767;transform-origin:0 0;transform:scaleX(0.9722)">11</div>
<div class="t mono" style="left:914px;top:334px;font-size:12px;line-height:17px;color:#676767;transform-origin:0 0;transform:scaleX(0.9722)">12</div>
<div class="t mono" style="left:914px;top:351px;font-size:12px;line-height:17px;color:#676767;transform-origin:0 0;transform:scaleX(0.9722)">13</div>
<div class="t mono" style="left:914px;top:368px;font-size:12px;line-height:17px;color:#676767;transform-origin:0 0;transform:scaleX(0.9722)">14</div>
<div class="t mono" style="left:914px;top:385px;font-size:12px;line-height:17px;color:#676767;transform-origin:0 0;transform:scaleX(0.9722)">15</div>
<div class="t mono" style="left:914px;top:402px;font-size:12px;line-height:17px;color:#676767;transform-origin:0 0;transform:scaleX(0.9722)">16</div>
<div class="t mono" style="left:914px;top:419px;font-size:12px;line-height:17px;color:#676767;transform-origin:0 0;transform:scaleX(0.9722)">17</div>
<div class="t mono" style="left:914px;top:436px;font-size:12px;line-height:17px;color:#676767;transform-origin:0 0;transform:scaleX(0.9722)">18</div>
<div class="t mono" style="left:914px;top:453px;font-size:12px;line-height:17px;color:#676767;transform-origin:0 0;transform:scaleX(0.9722)">19</div>
<div class="t mono" style="left:914px;top:470px;font-size:12px;line-height:17px;color:#676767;transform-origin:0 0;transform:scaleX(0.9722)">20</div>
<div class="t mono" style="left:914px;top:487px;font-size:12px;line-height:17px;color:#676767;transform-origin:0 0;transform:scaleX(0.9722)">21</div>
<div class="t mono" style="left:914px;top:504px;font-size:12px;line-height:17px;color:#676767;transform-origin:0 0;transform:scaleX(0.9722)">22</div>
<div class="t mono" style="left:914px;top:521px;font-size:12px;line-height:17px;color:#676767;transform-origin:0 0;transform:scaleX(0.9722)">23</div>
<div class="t mono" style="left:914px;top:538px;font-size:12px;line-height:17px;color:#676767;transform-origin:0 0;transform:scaleX(0.9722)">24</div>
<div class="t mono" style="left:914px;top:555px;font-size:12px;line-height:17px;color:#676767;transform-origin:0 0;transform:scaleX(0.9722)">25</div>
<div class="t mono" style="left:914px;top:572px;font-size:12px;line-height:17px;color:#676767;transform-origin:0 0;transform:scaleX(0.9722)">26</div>
<div class="t mono" style="left:914px;top:589px;font-size:12px;line-height:17px;color:#676767;transform-origin:0 0;transform:scaleX(0.9722)">27</div>
<div class="t mono" style="left:914px;top:606px;font-size:12px;line-height:17px;color:#676767;transform-origin:0 0;transform:scaleX(0.9722)">28</div>
<div class="t mono" style="left:914px;top:623px;font-size:12px;line-height:17px;color:#676767;transform-origin:0 0;transform:scaleX(0.9722)">29</div>
<div class="t mono" style="left:914px;top:640px;font-size:12px;line-height:17px;color:#676767;transform-origin:0 0;transform:scaleX(0.9722)">30</div>
<div class="t mono" style="left:914px;top:657px;font-size:12px;line-height:17px;color:#676767;transform-origin:0 0;transform:scaleX(0.9722)">31</div>
<div class="t mono" style="left:914px;top:674px;font-size:12px;line-height:17px;color:#676767;transform-origin:0 0;transform:scaleX(0.9722)">32</div>
<div class="t mono" style="left:914px;top:691px;font-size:12px;line-height:17px;color:#676767;transform-origin:0 0;transform:scaleX(0.9722)">33</div>
<div class="t mono" style="left:914px;top:708px;font-size:12px;line-height:17px;color:#676767;transform-origin:0 0;transform:scaleX(0.9722)">34</div>
<div class="t mono" style="left:914px;top:725px;font-size:12px;line-height:17px;color:#676767;transform-origin:0 0;transform:scaleX(0.9722)">35</div>
<div class="t mono" style="left:914px;top:742px;font-size:12px;line-height:17px;color:#676767;transform-origin:0 0;transform:scaleX(0.9722)">36</div>
<div class="t mono" style="left:914px;top:759px;font-size:12px;line-height:17px;color:#676767;transform-origin:0 0;transform:scaleX(0.9722)">37</div>
<div class="t mono" style="left:914px;top:776px;font-size:12px;line-height:17px;color:#676767;transform-origin:0 0;transform:scaleX(0.9722)">38</div>
<div class="t mono" style="left:914px;top:793px;font-size:12px;line-height:17px;color:#676767;transform-origin:0 0;transform:scaleX(0.9722)">39</div>
<div class="t mono" style="left:914px;top:810px;font-size:12px;line-height:17px;color:#676767;transform-origin:0 0;transform:scaleX(0.9722)">40</div>
<div class="t mono" style="left:914px;top:827px;font-size:12px;line-height:17px;color:#676767;transform-origin:0 0;transform:scaleX(0.9722)">41</div>
<div class="t mono" style="left:914px;top:844px;font-size:12px;line-height:17px;color:#676767;transform-origin:0 0;transform:scaleX(0.9722)">42</div>
<div class="t mono" style="left:914px;top:861px;font-size:12px;line-height:17px;color:#676767;transform-origin:0 0;transform:scaleX(0.9722)">43</div>
<div class="t mono" style="left:914px;top:878px;font-size:12px;line-height:17px;color:#676767;transform-origin:0 0;transform:scaleX(0.9722)">44</div>
<div style="position:absolute;left:1440px;top:145px;width:18px;height:747px;background:#c4c4c4"></div>
<div style="position:absolute;left:1440px;top:145px;width:18px;height:18px;background:#fff;border:1px solid #8a8a8a"></div>
<div style="position:absolute;left:1442px;top:147px;width:14px;height:14px;background:linear-gradient(90deg,#e4e4e4,#d2d2d2)"></div>
<svg style="left:1443px;top:150px" width="12" height="8"><path d="M1.5 6.5L6 2.2L10.5 6.5" stroke="#4a4a4a" stroke-width="1.9" fill="none"/></svg>
<div style="position:absolute;left:1440px;top:164px;width:18px;height:464px;background:#fff;border:1px solid #8a8a8a"></div>
<div style="position:absolute;left:1442px;top:166px;width:14px;height:460px;background:linear-gradient(90deg,#e4e4e4,#d2d2d2)"></div>
<svg style="left:1445px;top:393px" width="9" height="8"><path d="M0 .5h8M0 2.5h8M0 4.5h8M0 6.5h8" stroke="#555" stroke-width="1"/></svg>
<div style="position:absolute;left:1440px;top:874px;width:18px;height:18px;background:#fff;border:1px solid #8a8a8a"></div>
<div style="position:absolute;left:1442px;top:876px;width:14px;height:14px;background:linear-gradient(90deg,#e4e4e4,#d2d2d2)"></div>
<svg style="left:1443px;top:879px" width="12" height="8"><path d="M1.5 1.5L6 5.8L10.5 1.5" stroke="#4a4a4a" stroke-width="1.9" fill="none"/></svg>
<div style="position:absolute;left:890px;top:892px;width:567px;height:7px;background:#e8e8e8"></div>
<div class="t" style="left:1049px;top:894px;font-size:12px;color:#222;">Ln: 17</div>
<div class="t" style="left:1103px;top:894px;font-size:12px;color:#222;">Cl: 1</div>
<div class="t" style="left:1148px;top:894px;font-size:12px;color:#222;">INS</div>
<div style="position:absolute;left:1182px;top:892px;width:155px;height:7px;background:#fff;border:1px solid #9a9a9a;border-bottom:none"></div>
<div style="position:absolute;left:1320px;top:892px;width:17px;height:7px;background:#e0e0e0;border:1px solid #9a9a9a;border-bottom:none"></div>
<div style="position:absolute;left:1375px;top:893px;width:7px;height:6px;background:#fff;border:1px solid #9a9a9a;border-bottom:none"></div>
<div class="t" style="left:1186px;top:894px;font-size:11px;color:#222;">100%</div>
<div class="t" style="left:457px;top:894px;font-size:11px;color:#222;">100%</div>
<svg style="left:11px;top:58px" width="18" height="17"><rect x="0" y="9" width="2" height="7" fill="#6e6e6e"/><rect x="13" y="9" width="2" height="7" fill="#6e6e6e"/><path d="M2 12.5L6 9.8M2 12.5L6 15.2M13 12.5L9 9.8M13 12.5L9 15.2" stroke="#6e6e6e" stroke-width="1.9"/><path d="M13.00 5.70L15.40 5.70M12.47 6.97L14.17 8.67M11.20 7.50L11.20 9.90M9.93 6.97L8.23 8.67M9.40 5.70L7.00 5.70M9.93 4.43L8.23 2.73M11.20 3.90L11.20 1.50M12.47 4.43L14.17 2.73" stroke="#707070" stroke-width="1.3"/></svg>
<svg style="left:35px;top:58px" width="18" height="17"><rect x="0" y="9" width="2" height="7" fill="#6e6e6e"/><rect x="13" y="9" width="2" height="7" fill="#6e6e6e"/><path d="M2 12.5L6 9.8M2 12.5L6 15.2M13 12.5L9 9.8M13 12.5L9 15.2" stroke="#6e6e6e" stroke-width="1.9"/><path d="M8.5 2L15.5 9M15.5 2L8.5 9" stroke="#333" stroke-width="1.8"/></svg>
<svg style="left:59px;top:58px" width="18" height="17"><rect x="0" y="5" width="9" height="1.6" fill="#bdbdbd"/><rect x="0" y="8" width="9" height="1.6" fill="#b4b4b4"/><rect x="2" y="11" width="8" height="1.6" fill="#7a7a7a"/><rect x="0" y="14" width="8" height="1.6" fill="#b8b8b8"/><path d="M13.80 5.50L16.20 5.50M13.27 6.77L14.97 8.47M12.00 7.30L12.00 9.70M10.73 6.77L9.03 8.47M10.20 5.50L7.80 5.50M10.73 4.23L9.03 2.53M12.00 3.70L12.00 1.30M13.27 4.23L14.97 2.53" stroke="#707070" stroke-width="1.3"/></svg>
<svg style="left:83px;top:58px" width="18" height="17"><rect x="0" y="5" width="9" height="1.6" fill="#bdbdbd"/><rect x="0" y="8" width="9" height="1.6" fill="#b4b4b4"/><rect x="2" y="11" width="8" height="1.6" fill="#b8b8b8"/><rect x="0" y="14" width="8" height="1.6" fill="#7a7a7a"/><path d="M13.80 5.50L16.20 5.50M13.27 6.77L14.97 8.47M12.00 7.30L12.00 9.70M10.73 6.77L9.03 8.47M10.20 5.50L7.80 5.50M10.73 4.23L9.03 2.53M12.00 3.70L12.00 1.30M13.27 4.23L14.97 2.53" stroke="#707070" stroke-width="1.3"/></svg>
<div style="position:absolute;left:104px;top:55px;width:1px;height:23px;background:repeating-linear-gradient(#8e8e8e 0 1px,transparent 1px 2px)"></div>
<svg style="left:111px;top:60px" width="28" height="16"><rect x="0.5" y="0.5" width="11" height="14.5" fill="#f4f4f4" stroke="#9a9a9a" stroke-width="1"/><rect x="2" y="3" width="7" height="1" fill="#7a7a7a"/><rect x="2" y="6" width="7" height="1" fill="#7a7a7a"/><rect x="2" y="9" width="7" height="1" fill="#7a7a7a"/><rect x="2" y="12" width="7" height="1" fill="#7a7a7a"/><rect x="4" y="6.5" width="8" height="2.2" fill="#222"/><path d="M11 3L16 7.6L11 12.2Z" fill="#222"/><rect x="22" y="0" width="2.2" height="6" fill="#8a8a8a"/><path d="M19.5 5H26.5L23.1 9Z" fill="#8a8a8a"/><rect x="19.5" y="11" width="7" height="2" fill="#8a8a8a"/></svg>
<svg style="left:147px;top:59px" width="16" height="16"><path d="M0 2.5Q3.5 0 7 2.5V10Q3.5 12.5 0 10Z" fill="#8a8a8a"/><ellipse cx="3.5" cy="2.5" rx="3.5" ry="2" fill="#b0b0b0"/><path d="M9 10.5Q12 9 13.5 11.5Q14.5 14 12.5 15" stroke="#8a8a8a" stroke-width="1.6" fill="none"/><path d="M8 8.5V12H11.5Z" fill="#8a8a8a"/></svg>
<div style="position:absolute;left:168px;top:55px;width:1px;height:23px;background:repeating-linear-gradient(#8e8e8e 0 1px,transparent 1px 2px)"></div>
<svg style="left:176px;top:60px" width="16" height="16"><path d="M0 0.5H4L6 2.5H16V4.5H0Z" fill="#6f6f6f"/><path d="M0 5.5H4L6 7.5H16V9.5H0Z" fill="#6f6f6f"/><path d="M0 10.5H4L6 12.5H16V14.5H0Z" fill="#6f6f6f"/></svg>
<svg style="left:200px;top:59px" width="16" height="16"><rect x="0" y="0" width="15" height="15" fill="#6f6f6f"/><rect x="1.5" y="4.5" width="12" height="4.5" fill="#eeeeee"/><rect x="1.5" y="10" width="12" height="4" fill="#e4e4e4"/><path d="M1.5 1H6L3.75 3.5Z" fill="#fff"/><rect x="2" y="8.5" width="10" height="1" fill="#333"/><rect x="2" y="7.5" width="1" height="3" fill="#333"/></svg>
<svg style="left:224px;top:61px" width="16" height="13"><rect x="0" y="0" width="15" height="5.5" fill="#6f6f6f"/><rect x="0" y="6.5" width="15" height="5.5" fill="#6f6f6f"/><path d="M0.5 1L3 2.8L0.5 4.6Z M0.5 7.5L3 9.3L0.5 11.1Z" fill="#fff"/><rect x="0" y="0" width="1" height="12" fill="#e8e8e8"/></svg>
<div style="position:absolute;left:245px;top:56px;width:21px;height:21px;background:#c5d0dc"></div>
<svg style="left:248px;top:59px" width="16" height="16"><path d="M7 1C3 1 0.5 3.5 0.5 6.5C0.5 9 2 10.5 4 11.3L2 14.5L7 12C11 12 13.5 9.5 13.5 6.5C13.5 3.5 11 1 7 1Z" fill="#e4e8ec" stroke="#9aa0a8" stroke-width="1"/><rect x="3.5" y="6" width="1.8" height="1.8" fill="#555"/><rect x="6.2" y="6" width="1.8" height="1.8" fill="#555"/><rect x="8.9" y="6" width="1.8" height="1.8" fill="#555"/></svg>
<svg style="left:271px;top:59px" width="16" height="16"><path d="M4 0.5H15V6H4L1.5 3.25Z" fill="#6f6f6f"/><rect x="8" y="2" width="2" height="3" fill="#fff"/><rect x="11" y="2" width="1.5" height="3" fill="#fff"/><path d="M0 3.25H3" stroke="#222" stroke-width="1"/><path d="M4 8.5H15V14H4L1.5 11.25Z" fill="#6f6f6f"/><rect x="7" y="10" width="6" height="1" fill="#fff"/><rect x="7" y="12" width="6" height="1" fill="#fff"/><path d="M0 11.25H3" stroke="#222" stroke-width="1"/></svg>
<svg style="left:291px;top:62px" width="8" height="12"><rect x="2.5" y="0" width="2.6" height="4" fill="#8a8a8a"/><path d="M-0.3 3.5H7.9L3.8 7.8Z" fill="#8a8a8a"/><rect x="0" y="8.2" width="7.6" height="2" fill="#8a8a8a"/></svg>
<svg style="left:306px;top:59px" width="16" height="16"><ellipse cx="8.5" cy="3.8" rx="5" ry="3.3" fill="#f0f0f0" stroke="#8a8a8a" stroke-width="1"/><rect x="6" y="2.5" width="4" height="0.9" fill="#333"/><rect x="6.5" y="4.2" width="4" height="0.9" fill="#333"/><path d="M5 9H15V15H5L2.5 12Z" fill="#6f6f6f"/><path d="M0 12H3" stroke="#222" stroke-width="1"/></svg>
<svg style="left:326px;top:62px" width="8" height="12"><rect x="2.5" y="0" width="2.6" height="4" fill="#8a8a8a"/><path d="M-0.3 3.5H7.9L3.8 7.8Z" fill="#8a8a8a"/><rect x="0" y="8.2" width="7.6" height="2" fill="#8a8a8a"/></svg>
<svg style="left:341px;top:59px" width="16" height="16"><path d="M4 0.5H15V6H4L1.5 3.25Z" fill="#6f6f6f"/><rect x="7" y="2" width="6" height="1" fill="#fff"/><rect x="7" y="4" width="6" height="0.8" fill="#fff"/><path d="M0 3.25H3" stroke="#222" stroke-width="1"/><rect x="0" y="9" width="2.2" height="6" fill="#7c7c7c"/><path d="M4.5 10Q3 12 4.5 14" stroke="#7c7c7c" stroke-width="1.8" fill="none"/><path d="M10 10Q11.5 12 10 14" stroke="#7c7c7c" stroke-width="1.8" fill="none"/><rect x="13" y="9" width="2.2" height="6" fill="#7c7c7c"/><rect x="2" y="11.5" width="2" height="1.2" fill="#7c7c7c"/><rect x="11" y="11.5" width="2" height="1.2" fill="#7c7c7c"/></svg>
<svg style="left:361px;top:62px" width="8" height="12"><rect x="2.5" y="0" width="2.6" height="4" fill="#8a8a8a"/><path d="M-0.3 3.5H7.9L3.8 7.8Z" fill="#8a8a8a"/><rect x="0" y="8.2" width="7.6" height="2" fill="#8a8a8a"/></svg>
<div style="position:absolute;left:374px;top:56px;width:21px;height:21px;background:#c5d0dc"></div>
<svg style="left:377px;top:59px" width="16" height="16"><rect x="0.5" y="0.5" width="14" height="14" fill="#e6e8ea" stroke="#b0b4b8" stroke-width="1"/><rect x="2.5" y="4" width="2" height="2" fill="#555"/><rect x="5.5" y="4.6" width="7.5" height="2" fill="#5a5a5a"/><rect x="2" y="8.5" width="1.2" height="3.5" fill="#555"/><rect x="2.5" y="9.8" width="11" height="1.1" fill="#555"/></svg>
<div style="position:absolute;left:398px;top:56px;width:22px;height:22px;background:#fff;border:1.5px solid #3a62d8;border-radius:2px"></div>
<svg style="left:401px;top:60px" width="18" height="16"><rect x="0.5" y="0.5" width="3" height="3" fill="none" stroke="#3a52d8" stroke-width="1.1"/><rect x="0.5" y="5.5" width="3" height="3" fill="none" stroke="#3a52d8" stroke-width="1.1"/><rect x="0.5" y="10.5" width="3" height="3" fill="none" stroke="#3a52d8" stroke-width="1.1"/><path d="M10.5 -0.5L12.3 3.3L16.4 3.7L13.3 6.5L14.2 10.5L10.5 8.4L6.8 10.5L7.7 6.5L4.6 3.7L8.7 3.3Z" fill="#f0c420" stroke="#b8900a" stroke-width="0.6"/><path d="M11.5 9Q11.5 12 8 12" stroke="#101050" stroke-width="1.4" fill="none"/><path d="M5.5 12L8.5 9.8V14.2Z" fill="#101050"/></svg>
<div style="position:absolute;left:422px;top:55px;width:1px;height:23px;background:repeating-linear-gradient(#8e8e8e 0 1px,transparent 1px 2px)"></div>
<svg style="left:430px;top:59px" width="17" height="17"><path d="M3.8 14.5Q0.8 13 0.8 9Q0.8 5.5 3.8 4" stroke="#3a3a3a" stroke-width="2.1" fill="none"/><path d="M3 0.2L7.3 4.2L2.6 7.2Z" fill="#3a3a3a"/><circle cx="11.8" cy="4.2" r="4.1" fill="#8a8a8a"/><path d="M9.700000000000001 2.1L13.9 6.300000000000001M13.9 2.1L9.700000000000001 6.300000000000001" stroke="#fff" stroke-width="1.7" stroke-linecap="round"/></svg>
<svg style="left:454px;top:59px" width="17" height="17"><path d="M4.8 1Q0.9 2 0.9 6Q0.9 10 3.8 11.5" stroke="#3a3a3a" stroke-width="2.1" fill="none"/><path d="M3 8.6L7.6 12.2L3.2 15.8Z" fill="#3a3a3a"/><circle cx="11.8" cy="11.8" r="4.1" fill="#8a8a8a"/><path d="M9.700000000000001 9.700000000000001L13.9 13.9M13.9 9.700000000000001L9.700000000000001 13.9" stroke="#fff" stroke-width="1.7" stroke-linecap="round"/></svg>
<svg style="left:478px;top:59px" width="16" height="16"><rect x="7" y="0" width="8" height="12" fill="#7a7a7a"/><rect x="7" y="0" width="3" height="12" fill="#a8a8a8"/><rect x="7.5" y="7.5" width="7" height="5" fill="#fff"/><rect x="9" y="9" width="2" height="2" fill="#222"/><rect x="12" y="8.8" width="1" height="2.6" fill="#222"/><path d="M4 14Q0.9 12.5 0.9 9Q0.9 5.5 4 4.5" stroke="#3a3a3a" stroke-width="2" fill="none"/><path d="M3.5 1.5L6.5 5L3 7.5Z" fill="#3a3a3a"/></svg>
<svg style="left:502px;top:59px" width="16" height="16"><rect x="7" y="2" width="8" height="12" fill="#7a7a7a"/><rect x="7" y="2" width="3" height="12" fill="#a8a8a8"/><rect x="7.5" y="9.5" width="7" height="5" fill="#fff"/><rect x="9" y="11" width="2" height="2" fill="#222"/><rect x="12" y="10.8" width="1" height="2.6" fill="#222"/><path d="M4 1Q0.9 2 0.9 6Q0.9 9.5 3.5 11" stroke="#3a3a3a" stroke-width="2" fill="none"/><path d="M3 8.5L6.5 11.5L3 14.5Z" fill="#3a3a3a"/></svg>
<svg style="left:525px;top:59px" width="16" height="16"><rect x="0" y="3" width="3" height="1.8" fill="#6a6a6a"/><rect x="0" y="7" width="3" height="1.8" fill="#6a6a6a"/><path d="M3 0.5H11L13 3V10H3Z" fill="#6a6a6a"/><path d="M6 3V8.5L9.5 5.75Z" fill="#fff"/><rect x="12" y="5" width="3" height="1.6" fill="#6a6a6a"/><path d="M4.5 11L8 14.5L14.5 8" stroke="#8a8a8a" stroke-width="2.4" fill="none"/></svg>
<div style="position:absolute;left:547px;top:55px;width:1px;height:23px;background:repeating-linear-gradient(#8e8e8e 0 1px,transparent 1px 2px)"></div>
<svg style="left:555px;top:59px" width="16" height="17"><path d="M5 1Q1 2 1 6.5Q1 10 3.5 11.5" stroke="#3a3a3a" stroke-width="2.1" fill="none"/><path d="M3 8.5L7 12L3 15.5Z" fill="#3a3a3a"/><rect x="8" y="4" width="7" height="1.6" fill="#9a9a9a"/><rect x="8" y="7" width="7" height="1.6" fill="#9a9a9a"/><rect x="8" y="10" width="7" height="1.6" fill="#9a9a9a"/></svg>
<svg style="left:580px;top:59px" width="14" height="16"><rect x="0" y="0" width="2" height="8" fill="#3a3a3a"/><rect x="5" y="7" width="7" height="1.7" fill="#8a8a8a"/><rect x="5" y="10" width="7" height="1.7" fill="#8a8a8a"/><rect x="5" y="13" width="7" height="1.7" fill="#8a8a8a"/></svg>
<svg style="left:603px;top:59px" width="16" height="16"><rect x="3" y="0" width="2" height="8" fill="#3a3a3a"/><path d="M0 0.5L7 7.5" stroke="#3a3a3a" stroke-width="1.2"/><rect x="6" y="7" width="10" height="1.7" fill="#8a8a8a"/><rect x="8" y="10" width="7" height="1.7" fill="#8a8a8a"/><rect x="8" y="13" width="7" height="1.7" fill="#8a8a8a"/></svg>
<div style="position:absolute;left:624px;top:55px;width:1px;height:23px;background:repeating-linear-gradient(#8e8e8e 0 1px,transparent 1px 2px)"></div>
<svg style="left:633px;top:59px" width="14" height="16"><path d="M5 1Q1 2 1 6Q1 9.5 3.5 11" stroke="#0a0a40" stroke-width="2" fill="none"/><path d="M3 8L7 11.5L3 15Z" fill="#0a0a40"/><path d="M8 3H12V15L10 13.5L8 15Z" fill="#3a50e8"/></svg>
<svg style="left:657px;top:59px" width="14" height="16"><path d="M5 15Q1 13.5 1 10Q1 6.5 4 5" stroke="#0a0a40" stroke-width="2" fill="none"/><path d="M3.5 1.5L7.5 5L3.5 8.5Z" fill="#0a0a40"/><path d="M8 0.5H12V12.5L10 11L8 12.5Z" fill="#3a50e8"/></svg>
<div style="position:absolute;left:677px;top:55px;width:1px;height:23px;background:repeating-linear-gradient(#8e8e8e 0 1px,transparent 1px 2px)"></div>
<svg style="left:684px;top:58px" width="6" height="8"><path d="M0 0L4.5 3.75L0 7.5Z" fill="#000"/></svg>
<svg style="left:698px;top:59px" width="16" height="16"><rect x="0.5" y="0.5" width="13" height="13" fill="#eef0fb" stroke="#7a8ae0" stroke-width="1"/><rect x="1" y="2.5" width="12" height="1" fill="#8a94c0"/><rect x="1" y="7" width="12" height="1" fill="#8a94c0"/><circle cx="12" cy="9" r="2" fill="#f0c090" stroke="#102040" stroke-width="0.8"/><path d="M9 15.5Q9 11.5 12 11.5Q15 11.5 15 15.5Z" fill="#2a6aaa"/></svg>
<svg style="left:739px;top:58px" width="18" height="17"><rect x="0" y="5" width="9" height="1.6" fill="#bdbdbd"/><rect x="0" y="8" width="9" height="1.6" fill="#b4b4b4"/><rect x="2" y="11" width="8" height="1.6" fill="#7a7a7a"/><rect x="0" y="14" width="8" height="1.6" fill="#b8b8b8"/><path d="M13.80 5.50L16.20 5.50M13.27 6.77L14.97 8.47M12.00 7.30L12.00 9.70M10.73 6.77L9.03 8.47M10.20 5.50L7.80 5.50M10.73 4.23L9.03 2.53M12.00 3.70L12.00 1.30M13.27 4.23L14.97 2.53" stroke="#707070" stroke-width="1.3"/></svg>
<svg style="left:763px;top:58px" width="18" height="17"><rect x="0" y="5" width="9" height="1.6" fill="#bdbdbd"/><rect x="0" y="8" width="9" height="1.6" fill="#b4b4b4"/><rect x="2" y="11" width="8" height="1.6" fill="#b8b8b8"/><rect x="0" y="14" width="8" height="1.6" fill="#7a7a7a"/><path d="M13.80 5.50L16.20 5.50M13.27 6.77L14.97 8.47M12.00 7.30L12.00 9.70M10.73 6.77L9.03 8.47M10.20 5.50L7.80 5.50M10.73 4.23L9.03 2.53M12.00 3.70L12.00 1.30M13.27 4.23L14.97 2.53" stroke="#707070" stroke-width="1.3"/></svg>
<div style="position:absolute;left:784px;top:55px;width:1px;height:23px;background:repeating-linear-gradient(#8e8e8e 0 1px,transparent 1px 2px)"></div>
<svg style="left:791px;top:60px" width="28" height="16"><rect x="0.5" y="0.5" width="11" height="14.5" fill="#e2e7fb" stroke="#6a7ad8" stroke-width="1"/><rect x="2" y="3" width="7" height="1" fill="#4a52a0"/><rect x="2" y="6" width="7" height="1" fill="#4a52a0"/><rect x="2" y="9" width="7" height="1" fill="#4a52a0"/><rect x="2" y="12" width="7" height="1" fill="#4a52a0"/><rect x="4" y="6.5" width="8" height="2.2" fill="#0c0c50"/><path d="M11 3L16 7.6L11 12.2Z" fill="#0c0c50"/><rect x="22" y="0" width="2.2" height="6" fill="#000"/><path d="M19.5 5H26.5L23.1 9Z" fill="#000"/><rect x="19.5" y="11" width="7" height="2" fill="#000"/></svg>
<svg style="left:832px;top:59px" width="16" height="16"><path d="M0 2.5Q3.5 0 7 2.5V10Q3.5 12.5 0 10Z" fill="#8a8a8a"/><ellipse cx="3.5" cy="2.5" rx="3.5" ry="2" fill="#b0b0b0"/><path d="M9 10.5Q12 9 13.5 11.5Q14.5 14 12.5 15" stroke="#8a8a8a" stroke-width="1.6" fill="none"/><path d="M8 8.5V12H11.5Z" fill="#8a8a8a"/></svg>
<div style="position:absolute;left:853px;top:55px;width:1px;height:23px;background:repeating-linear-gradient(#8e8e8e 0 1px,transparent 1px 2px)"></div>
<svg style="left:861px;top:60px" width="16" height="16"><path d="M0 0.5H4L6 2.5H16V4.5H0Z" fill="#6f6f6f"/><path d="M0 5.5H4L6 7.5H16V9.5H0Z" fill="#6f6f6f"/><path d="M0 10.5H4L6 12.5H16V14.5H0Z" fill="#6f6f6f"/></svg>
<svg style="left:885px;top:59px" width="16" height="16"><path d="M4 0.5H15V6H4L1.5 3.25Z" fill="#a8a8a8"/><rect x="8" y="2" width="2" height="3" fill="#fff"/><rect x="11" y="2" width="1.5" height="3" fill="#fff"/><path d="M0 3.25H3" stroke="#0a0a40" stroke-width="1"/><path d="M4 8.5H15V14H4L1.5 11.25Z" fill="#5a1aa0"/><rect x="7" y="10" width="6" height="1" fill="#fff"/><rect x="7" y="12" width="6" height="1" fill="#fff"/><path d="M0 11.25H3" stroke="#0a0a40" stroke-width="1"/></svg>
<svg style="left:908px;top:59px" width="16" height="16"><ellipse cx="8.5" cy="3.8" rx="5" ry="3.3" fill="#f4f4f4" stroke="#8a8a8a" stroke-width="1"/><rect x="6" y="2.5" width="4" height="0.9" fill="#333"/><rect x="6.5" y="4.2" width="4" height="0.9" fill="#333"/><path d="M5 9H15V15H5L2.5 12Z" fill="#2a2a2a"/><path d="M0 12H3" stroke="#222" stroke-width="1"/></svg>
<svg style="left:928px;top:62px" width="8" height="12"><rect x="2.5" y="0" width="2.6" height="4" fill="#000"/><path d="M-0.3 3.5H7.9L3.8 7.8Z" fill="#000"/><rect x="0" y="8.2" width="7.6" height="2" fill="#000"/></svg>
<div style="position:absolute;left:941px;top:56px;width:22px;height:22px;background:#fff;border:1.5px solid #3a62d8;border-radius:2px"></div>
<svg style="left:944px;top:60px" width="18" height="16"><rect x="0.5" y="0.5" width="3" height="3" fill="none" stroke="#3a52d8" stroke-width="1.1"/><rect x="0.5" y="5.5" width="3" height="3" fill="none" stroke="#3a52d8" stroke-width="1.1"/><rect x="0.5" y="10.5" width="3" height="3" fill="none" stroke="#3a52d8" stroke-width="1.1"/><path d="M10.5 -0.5L12.3 3.3L16.4 3.7L13.3 6.5L14.2 10.5L10.5 8.4L6.8 10.5L7.7 6.5L4.6 3.7L8.7 3.3Z" fill="#f0c420" stroke="#b8900a" stroke-width="0.6"/><path d="M11.5 9Q11.5 12 8 12" stroke="#101050" stroke-width="1.4" fill="none"/><path d="M5.5 12L8.5 9.8V14.2Z" fill="#101050"/></svg>
<div style="position:absolute;left:965px;top:55px;width:1px;height:23px;background:repeating-linear-gradient(#8e8e8e 0 1px,transparent 1px 2px)"></div>
<svg style="left:973px;top:59px" width="17" height="17"><path d="M3.8 14.5Q0.8 13 0.8 9Q0.8 5.5 3.8 4" stroke="#0a0a40" stroke-width="2.1" fill="none"/><path d="M3 0.2L7.3 4.2L2.6 7.2Z" fill="#0a0a40"/><circle cx="11.8" cy="4.2" r="4.1" fill="#d01818"/><path d="M9.700000000000001 2.1L13.9 6.300000000000001M13.9 2.1L9.700000000000001 6.300000000000001" stroke="#fff" stroke-width="1.7" stroke-linecap="round"/></svg>
<svg style="left:997px;top:59px" width="17" height="17"><path d="M4.8 1Q0.9 2 0.9 6Q0.9 10 3.8 11.5" stroke="#0a0a40" stroke-width="2.1" fill="none"/><path d="M3 8.6L7.6 12.2L3.2 15.8Z" fill="#0a0a40"/><circle cx="11.8" cy="11.8" r="4.1" fill="#d01818"/><path d="M9.700000000000001 9.700000000000001L13.9 13.9M13.9 9.700000000000001L9.700000000000001 13.9" stroke="#fff" stroke-width="1.7" stroke-linecap="round"/></svg>
<svg style="left:1021px;top:59px" width="16" height="16"><rect x="7" y="0" width="8" height="12" fill="#7a7a7a"/><rect x="7" y="0" width="3" height="12" fill="#a8a8a8"/><rect x="7.5" y="7.5" width="7" height="5" fill="#fff"/><rect x="9" y="9" width="2" height="2" fill="#222"/><rect x="12" y="8.8" width="1" height="2.6" fill="#222"/><path d="M4 14Q0.9 12.5 0.9 9Q0.9 5.5 4 4.5" stroke="#3a3a3a" stroke-width="2" fill="none"/><path d="M3.5 1.5L6.5 5L3 7.5Z" fill="#3a3a3a"/></svg>
<svg style="left:1045px;top:59px" width="16" height="16"><rect x="7" y="2" width="8" height="12" fill="#7a7a7a"/><rect x="7" y="2" width="3" height="12" fill="#a8a8a8"/><rect x="7.5" y="9.5" width="7" height="5" fill="#fff"/><rect x="9" y="11" width="2" height="2" fill="#222"/><rect x="12" y="10.8" width="1" height="2.6" fill="#222"/><path d="M4 1Q0.9 2 0.9 6Q0.9 9.5 3.5 11" stroke="#3a3a3a" stroke-width="2" fill="none"/><path d="M3 8.5L6.5 11.5L3 14.5Z" fill="#3a3a3a"/></svg>
<svg style="left:1069px;top:59px" width="16" height="16"><rect x="0" y="1" width="3" height="1.6" fill="#8a8a8a"/><rect x="5" y="1" width="6" height="1.6" fill="#b8b8b8"/><rect x="5" y="4" width="10" height="1.6" fill="#8a8a8a"/><rect x="5" y="7" width="10" height="1.6" fill="#8a8a8a"/><rect x="5" y="10" width="6" height="1.6" fill="#b8b8b8"/><rect x="12" y="10" width="3" height="1.6" fill="#8a8a8a"/><rect x="5" y="13" width="10" height="0.8" fill="#c8c8c8"/></svg>
<svg style="left:1093px;top:59px" width="16" height="16"><rect x="0" y="3" width="3" height="1.8" fill="#6a6a6a"/><rect x="0" y="7" width="3" height="1.8" fill="#6a6a6a"/><path d="M3 0.5H11L13 3V10H3Z" fill="#6a6a6a"/><path d="M6 3V8.5L9.5 5.75Z" fill="#fff"/><rect x="12" y="5" width="3" height="1.6" fill="#6a6a6a"/><path d="M4.5 11L8 14.5L14.5 8" stroke="#20a020" stroke-width="2.4" fill="none"/></svg>
<div style="position:absolute;left:1114px;top:55px;width:1px;height:23px;background:repeating-linear-gradient(#8e8e8e 0 1px,transparent 1px 2px)"></div>
<svg style="left:1122px;top:59px" width="16" height="17"><path d="M5 1Q1 2 1 6.5Q1 10 3.5 11.5" stroke="#0a0a40" stroke-width="2.1" fill="none"/><path d="M3 8.5L7 12L3 15.5Z" fill="#0a0a40"/><rect x="8" y="4" width="7" height="1.6" fill="#9a9a9a"/><rect x="8" y="7" width="7" height="1.6" fill="#9a9a9a"/><rect x="8" y="10" width="7" height="1.6" fill="#3a62e8"/></svg>
<svg style="left:1146px;top:60px" width="16" height="16"><rect x="0" y="0.5" width="15" height="1.7" fill="#a8a8a8"/><rect x="0" y="13" width="15" height="1.7" fill="#a8a8a8"/><rect x="8.5" y="3.5" width="6.5" height="1.7" fill="#3a62e8"/><rect x="8.5" y="6.5" width="6.5" height="1.7" fill="#3a62e8"/><rect x="8.5" y="9.5" width="6.5" height="1.7" fill="#3a62e8"/><rect x="0" y="6.5" width="5" height="2" fill="#0a0a40"/><path d="M4 4L8 7.5L4 11Z" fill="#0a0a40"/></svg>
<svg style="left:1170px;top:60px" width="16" height="16"><rect x="0" y="0.5" width="15" height="1.7" fill="#a8a8a8"/><rect x="0" y="13" width="15" height="1.7" fill="#a8a8a8"/><rect x="8.5" y="3.5" width="6.5" height="1.7" fill="#3a62e8"/><rect x="8.5" y="6.5" width="6.5" height="1.7" fill="#3a62e8"/><rect x="8.5" y="9.5" width="6.5" height="1.7" fill="#3a62e8"/><rect x="3" y="6.5" width="5" height="2" fill="#0a0a40"/><path d="M4 4L0 7.5L4 11Z" fill="#0a0a40"/></svg>
<svg style="left:1194px;top:59px" width="16" height="16"><rect x="0" y="1.5" width="5" height="1.5" fill="#0a0a40"/><path d="M4 0L7 2.25L4 4.5Z" fill="#0a0a40"/><rect x="0" y="6" width="8" height="1.5" fill="#0a0a40"/><path d="M7 4.5L10 6.75L7 9Z" fill="#0a0a40"/><rect x="0" y="10.5" width="5" height="1.5" fill="#0a0a40"/><path d="M4 9L7 11.25L4 13.5Z" fill="#0a0a40"/><rect x="8" y="1" width="7" height="1.6" fill="#8aa0f0"/><rect x="8" y="4" width="7" height="1.6" fill="#8aa0f0"/><rect x="8" y="7" width="7" height="1.6" fill="#8aa0f0"/><rect x="8" y="10" width="7" height="1.6" fill="#8aa0f0"/><path d="M7.5 0V15M11 0V15" stroke="#0a0a40" stroke-width="0.9" stroke-dasharray="1 1"/></svg>
<svg style="left:1220px;top:59px" width="14" height="16"><rect x="0" y="0" width="2" height="8" fill="#0a0a40"/><rect x="5" y="7" width="7" height="1.7" fill="#3a62e8"/><rect x="5" y="10" width="7" height="1.7" fill="#3a62e8"/><rect x="5" y="13" width="7" height="1.7" fill="#3a62e8"/></svg>
<svg style="left:1242px;top:59px" width="16" height="16"><rect x="3" y="0" width="2" height="8" fill="#0a0a40"/><path d="M0 0.5L7 7.5" stroke="#e01010" stroke-width="1.2"/><rect x="6" y="7" width="10" height="1.7" fill="#3a62e8"/><rect x="8" y="10" width="7" height="1.7" fill="#3a62e8"/><rect x="8" y="13" width="7" height="1.7" fill="#3a62e8"/></svg>
<div style="position:absolute;left:1263px;top:55px;width:1px;height:23px;background:repeating-linear-gradient(#8e8e8e 0 1px,transparent 1px 2px)"></div>
<svg style="left:1272px;top:59px" width="17" height="16"><path d="M0 0.5H5V15L2.5 12.5L0 15Z" fill="#3a50e8"/><path d="M12.50 5.50L16.10 5.50M12.21 6.21L14.75 8.75M11.50 6.50L11.50 10.10M10.79 6.21L8.25 8.75M10.50 5.50L6.90 5.50M10.79 4.79L8.25 2.25M11.50 4.50L11.50 0.90M12.21 4.79L14.75 2.25" stroke="#e0cc00" stroke-width="1.7"/></svg>
<svg style="left:1296px;top:59px" width="14" height="16"><path d="M5 1Q1 2 1 6Q1 9.5 3.5 11" stroke="#0a0a40" stroke-width="2" fill="none"/><path d="M3 8L7 11.5L3 15Z" fill="#0a0a40"/><path d="M8 3H12V15L10 13.5L8 15Z" fill="#3a50e8"/></svg>
<svg style="left:1320px;top:59px" width="14" height="16"><path d="M5 15Q1 13.5 1 10Q1 6.5 4 5" stroke="#0a0a40" stroke-width="2" fill="none"/><path d="M3.5 1.5L7.5 5L3.5 8.5Z" fill="#0a0a40"/><path d="M8 0.5H12V12.5L10 11L8 12.5Z" fill="#3a50e8"/></svg>
<div style="position:absolute;left:1340px;top:55px;width:1px;height:23px;background:repeating-linear-gradient(#8e8e8e 0 1px,transparent 1px 2px)"></div>
<svg style="left:1348px;top:59px" width="16" height="16"><circle cx="10" cy="4.5" r="3.3" fill="#eee" stroke="#7a7a7a" stroke-width="1.3"/><path d="M12.5 7L15 9.5" stroke="#8a8a8a" stroke-width="1.6"/><circle cx="4.5" cy="10.5" r="4.2" fill="#a0a0a0"/><rect x="4.5" y="6" width="4.5" height="9" fill="#c8c8c8"/></svg>
<svg style="left:1372px;top:60px" width="17" height="15"><rect x="0.8" y="0.8" width="5.5" height="4" rx="1" fill="#e4e4e4" stroke="#1a2470" stroke-width="1.4"/><rect x="8.5" y="0.8" width="5.5" height="4" rx="1" fill="#e4e4e4" stroke="#1a2470" stroke-width="1.4"/><path d="M6.3 2.5H8.5M14 2.5Q15.5 2.5 15.5 4.5" stroke="#1a2470" stroke-width="1.2" fill="none"/><path d="M8 7L14 10L8 13Z" fill="#10c030"/></svg>
<svg style="left:1395px;top:58px" width="6" height="8"><path d="M0 0L4.5 3.75L0 7.5Z" fill="#000"/></svg>
<svg style="left:1427px;top:59px" width="16" height="16"><rect x="0.5" y="0.5" width="13" height="13" fill="#eef0fb" stroke="#7a8ae0" stroke-width="1"/><rect x="1" y="2.5" width="12" height="1" fill="#8a94c0"/><rect x="1" y="7" width="12" height="1" fill="#8a94c0"/><circle cx="12" cy="9" r="2" fill="#f0c090" stroke="#102040" stroke-width="0.8"/><path d="M9 15.5Q9 11.5 12 11.5Q15 11.5 15 15.5Z" fill="#2a6aaa"/></svg>
</body></html>
